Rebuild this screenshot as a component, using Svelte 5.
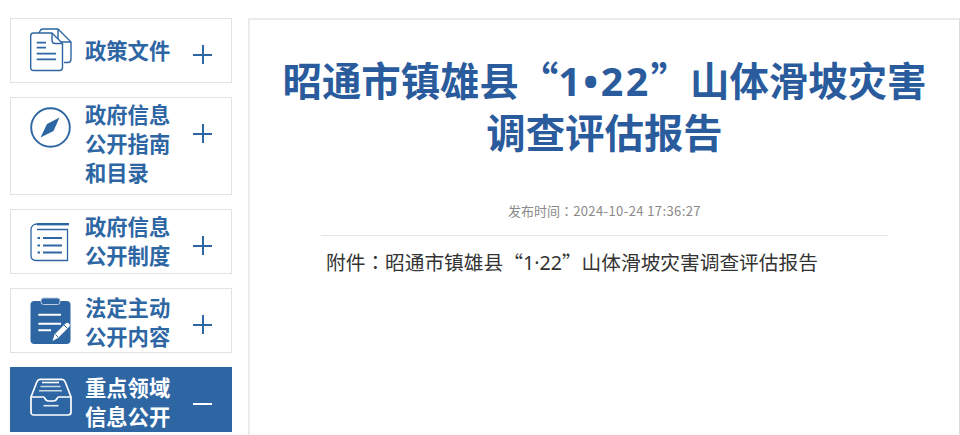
<script>
  const menus = [
    { icon: 'docs', lines: ['政策文件'], sign: '+' },
    { icon: 'compass', lines: ['政府信息', '公开指南', '和目录'], sign: '+' },
    { icon: 'book', lines: ['政府信息', '公开制度'], sign: '+' },
    { icon: 'clip', lines: ['法定主动', '公开内容'], sign: '+' },
    { icon: 'tray', lines: ['重点领域', '信息公开'], sign: '-', active: true }
  ];
</script>

<div class="page" lang="zh-CN">
  <aside class="side">
    {#each menus as m}
      <div class="item" class:active={m.active} class:single={m.lines.length === 1} class:triple={m.lines.length === 3}>
        <span class="icon {m.icon}">
          {#if m.icon === 'docs'}
            <svg width="42" height="44" viewBox="0 0 42 44" fill="none" stroke="currentColor" stroke-width="1.4" stroke-linejoin="round">
              <path d="M9 5L10 3C10.500 1.500 11.500 1 13 1H28L41 14V31C41 33.500 40 34.500 38 34.500H34" />
              <path d="M28 1V10C28 12.500 29 14 31 14H41" />
              <path d="M3.500 5H22L32.500 15.500V39.500C32.500 41.500 31.500 42.500 29.500 42.500H3.500C1.500 42.500 0.700 41.500 0.700 39.500V8C0.700 6 1.500 5 3.500 5Z" fill="#fff" />
              <path d="M22 5V12.500C22 14.500 23 15.500 25 15.500H32.500" />
              <path d="M6.700 14.700H16M6.700 19.700H16M6.700 25.700H26M6.700 31.300H26" stroke-width="1.800" />
            </svg>
          {:else if m.icon === 'compass'}
            <svg width="41" height="41" viewBox="0 0 41 41" fill="none">
              <circle cx="20.500" cy="20.500" r="19.300" stroke="currentColor" stroke-width="1.900" />
              <path d="M29.500 10.500L23.500 24L10.500 30.500L17 17Z" fill="currentColor" />
            </svg>
          {:else if m.icon === 'book'}
            <svg width="40" height="40" viewBox="0 0 40 40" fill="none" stroke="currentColor" stroke-width="1.300">
              <path d="M39 2H7C3.500 2 1 4.500 1 7.500V33.500C1 36.500 3 38.500 6 38.500H37.500V7.500H7" />
              <path d="M7 2.200H39" stroke-width="2.400" />
              <path d="M13 16H32M13 23.500H32M13 30.500H32" stroke-width="2.200" />
              <path d="M7.500 16H10M7.500 23.500H10M7.500 30.500H10" stroke-width="2.200" />
            </svg>
          {:else if m.icon === 'clip'}
            <svg width="42" height="48" viewBox="0 0 42 48">
              <rect x="0.500" y="4" width="40" height="43" rx="4" fill="currentColor" />
              <rect x="11" y="1" width="19" height="6.500" rx="2.500" fill="currentColor" stroke="#b9cce0" stroke-width="1" />
              <path stroke="#fff" stroke-width="2" fill="none" d="M8.300 17.700H31M8.300 26.700H31M8.300 33.300H21" />
              <path fill="#fff" d="M22.500 44L24.500 37.500L35.500 26.500C36.500 25.500 38 25.500 39 26.500C40 27.500 40 29 39 30L28 41Z" />
              <path stroke="currentColor" stroke-width="1" fill="none" d="M34 28L37.500 31.500M25.500 37.500L28 40" />
            </svg>
          {:else}
            <svg width="42" height="40" viewBox="0 0 42 40" fill="none" stroke="currentColor" stroke-width="1.700" stroke-linejoin="round">
              <path d="M1 20L7 4.500C7.700 3 8.500 2.300 10 2.300H32C33.500 2.300 34.300 3 35 4.500L41 20" />
              <path d="M1 20H13.500C15 20 15 24 18 24H24C27 24 27 20 28.500 20H41V35C41 37 40 38 38 38H4C2 38 1 37 1 35Z" />
              <path d="M12 5.500H29" stroke-width="1.600" />
              <path d="M10.500 9.500H30.500M9 13.700H32" stroke-width="1.600" opacity="0.75" />
              <path d="M13.500 28.700H28.500" stroke-width="1.600" opacity="0.85" />
            </svg>
          {/if}
        </span>
        <span class="label">
          {#each m.lines as line}<span>{line}</span>{/each}
        </span>
        <span class="sign" class:minus={m.sign === '-'}></span>
      </div>
    {/each}
  </aside>

  <main class="panel">
    <h1>昭通市镇雄县“<span class="num">1•22</span>”山体滑坡灾害<br />调查评估报告</h1>
    <div class="time">发布时间<span class="colon" lang="zh-TW">：</span><span class="date">2024-10-24 17:36:27</span></div>
    <p class="attach">附件<span class="colon" lang="zh-TW">：</span>昭通市镇雄县“<span class="num">1·22</span>”山体滑坡灾害调查评估报告</p>
  </main>
</div>

<style>
  :global(body) {
    margin: 0;
    background: #fff;
    overflow: hidden;
  }

  .page {
    width: 960px;
    height: 435px;
    overflow: hidden;
    display: flex;
    align-items: flex-start;
    gap: 16px;
    padding: 18px 0 0 10px;
    box-sizing: border-box;
    font-family: "Noto Sans CJK SC", "Liberation Sans", sans-serif;
  }

  .side {
    width: 222px;
    flex: none;
    display: flex;
    flex-direction: column;
    gap: 14px;
  }

  .item {
    box-sizing: border-box;
    display: flex;
    align-items: flex-start;
    min-height: 65px;
    padding: 0 19px;
    border: 1px solid #e2e2e2;
    color: #2d66a3;
  }

  .item.triple {
    min-height: 98px;
  }

  .item.active {
    background: #2d66a3;
    border-color: #2d66a3;
    color: #fff;
  }

  .icon {
    width: 55px;
    flex: none;
    display: flex;
    margin-top: 9px;
  }

  .icon.book {
    margin-top: 12px;
  }

  .icon.clip {
    margin-top: 8px;
  }

  .label {
    flex: 1;
    display: flex;
    flex-direction: column;
    padding-top: 1px;
    font-size: 21.300px;
    line-height: 29px;
    font-weight: 700;
  }

  .icon.clip + .label {
    padding-top: 3px;
  }

  .icon.tray + .label {
    padding-top: 4px;
  }

  .single .label {
    padding-top: 16px;
  }

  .sign {
    position: relative;
    width: 19px;
    height: 19px;
    flex: none;
    margin-top: 26px;
  }

  .sign::before,
  .sign::after {
    content: "";
    position: absolute;
    background: currentColor;
  }

  .sign::before {
    left: 0;
    right: 0;
    top: 9px;
    height: 1.500px;
  }

  .sign::after {
    top: 0;
    bottom: 0;
    left: 9px;
    width: 1.500px;
  }

  .sign.minus::after {
    display: none;
  }

  .panel {
    flex: 1;
    min-height: 420px;
    box-sizing: border-box;
    padding: 0 71px;
    border: 1px solid #ececec;
    border-width: 2px 1px 0 2px;
    border-right-color: #dcdcdc;
  }

  h1 {
    margin: 34px -60px 0;
    font-size: 39.400px;
    line-height: 49px;
    font-weight: 700;
    color: #2a5b9c;
    text-align: center;
  }

  h1 .num {
    letter-spacing: 2.500px;
  }

  .num {
    font-family: "Noto Sans", "Liberation Sans", sans-serif;
  }

  .colon {
    font-family: "Noto Sans CJK TC", sans-serif;
  }

  .time {
    margin-top: 47px;
    padding-bottom: 15px;
    border-bottom: 1px solid #e6e6e6;
    font-size: 13px;
    line-height: 18px;
    color: #8a8a8a;
    text-align: center;
  }

  .date {
    letter-spacing: 0.400px;
  }

  .attach {
    margin: 13px 0 0 5px;
    font-size: 19.700px;
    line-height: 26px;
    color: #333;
  }
</style>
